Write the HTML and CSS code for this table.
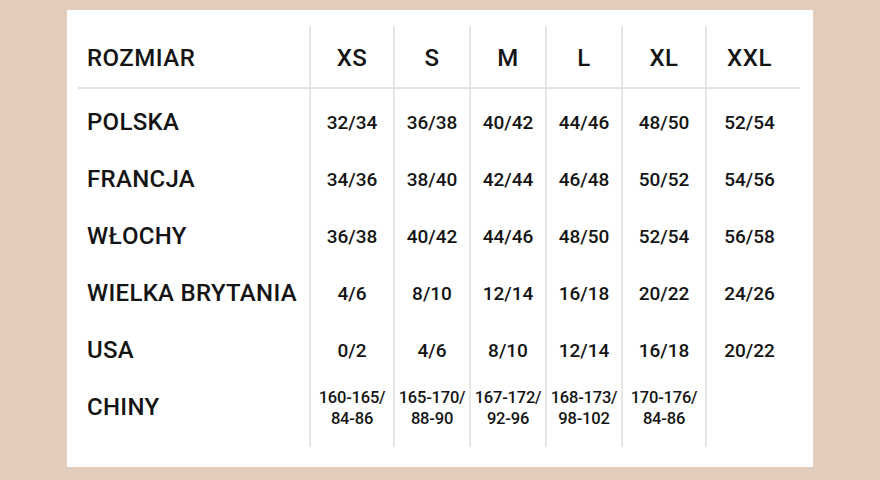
FILE: index.html
```html
<!DOCTYPE html>
<html lang="pl">
<head>
<meta charset="utf-8">
<title>Tabela rozmiarów</title>
<link rel="stylesheet" href="styles.css">
</head>
<body>
<div class="card">
  <div class="chart">
    <div class="cell head label">ROZMIAR</div>
    <div class="cell head size">XS</div>
    <div class="cell head size">S</div>
    <div class="cell head size">M</div>
    <div class="cell head size">L</div>
    <div class="cell head size">XL</div>
    <div class="cell head size last">XXL</div>

    <div class="cell first label">POLSKA</div>
    <div class="cell first size">32/34</div>
    <div class="cell first size">36/38</div>
    <div class="cell first size">40/42</div>
    <div class="cell first size">44/46</div>
    <div class="cell first size">48/50</div>
    <div class="cell first size last">52/54</div>

    <div class="cell label">FRANCJA</div>
    <div class="cell size">34/36</div>
    <div class="cell size">38/40</div>
    <div class="cell size">42/44</div>
    <div class="cell size">46/48</div>
    <div class="cell size">50/52</div>
    <div class="cell size last">54/56</div>

    <div class="cell label">WŁOCHY</div>
    <div class="cell size">36/38</div>
    <div class="cell size">40/42</div>
    <div class="cell size">44/46</div>
    <div class="cell size">48/50</div>
    <div class="cell size">52/54</div>
    <div class="cell size last">56/58</div>

    <div class="cell label">WIELKA BRYTANIA</div>
    <div class="cell size">4/6</div>
    <div class="cell size">8/10</div>
    <div class="cell size">12/14</div>
    <div class="cell size">16/18</div>
    <div class="cell size">20/22</div>
    <div class="cell size last">24/26</div>

    <div class="cell label">USA</div>
    <div class="cell size">0/2</div>
    <div class="cell size">4/6</div>
    <div class="cell size">8/10</div>
    <div class="cell size">12/14</div>
    <div class="cell size">16/18</div>
    <div class="cell size last">20/22</div>

    <div class="cell end label">CHINY</div>
    <div class="cell end size small">160-165/<br>84-86</div>
    <div class="cell end size small">165-170/<br>88-90</div>
    <div class="cell end size small">167-172/<br>92-96</div>
    <div class="cell end size small">168-173/<br>98-102</div>
    <div class="cell end size small">170-176/<br>84-86</div>
    <div class="cell end size last small"></div>
  </div>
</div>
</body>
</html>
```

FILE: styles.css
```css
html, body {
  margin: 0;
  padding: 0;
}

body {
  width: 880px;
  height: 480px;
  background: #e2cdbd;
  font-family: Roboto, "Liberation Sans", sans-serif;
  color: #141414;
  overflow: hidden;
}

.card {
  box-sizing: border-box;
  margin: 10px 0 0 67px;
  width: 746px;
  height: 457px;
  background: #ffffff;
  padding: 16px 13px 20px 11px;
}

.chart {
  display: grid;
  grid-template-columns: 231px 84px 76px 76px 76px 84px 95px;
}

.cell {
  box-sizing: border-box;
  display: flex;
  align-items: center;
  height: 57px;
  font-weight: 500;
  font-size: 19px;
  line-height: 21px;
}

.label {
  padding-left: 9px;
  font-size: 24px;
  letter-spacing: 0.3px;
}

.size {
  justify-content: center;
  text-align: center;
  border-left: 2px solid #e6e6e6;
}

.size.last {
  padding-right: 8px;
}

.head {
  height: 63px;
  padding-top: 4px;
  border-bottom: 2px solid #e3e3e3;
  font-size: 24px;
  letter-spacing: 0.5px;
}

.first {
  height: 62px;
  padding-top: 5px;
}

.end {
  height: 68px;
  padding-bottom: 11px;
}

.small {
  font-size: 16.5px;
  letter-spacing: -0.2px;
}
```
